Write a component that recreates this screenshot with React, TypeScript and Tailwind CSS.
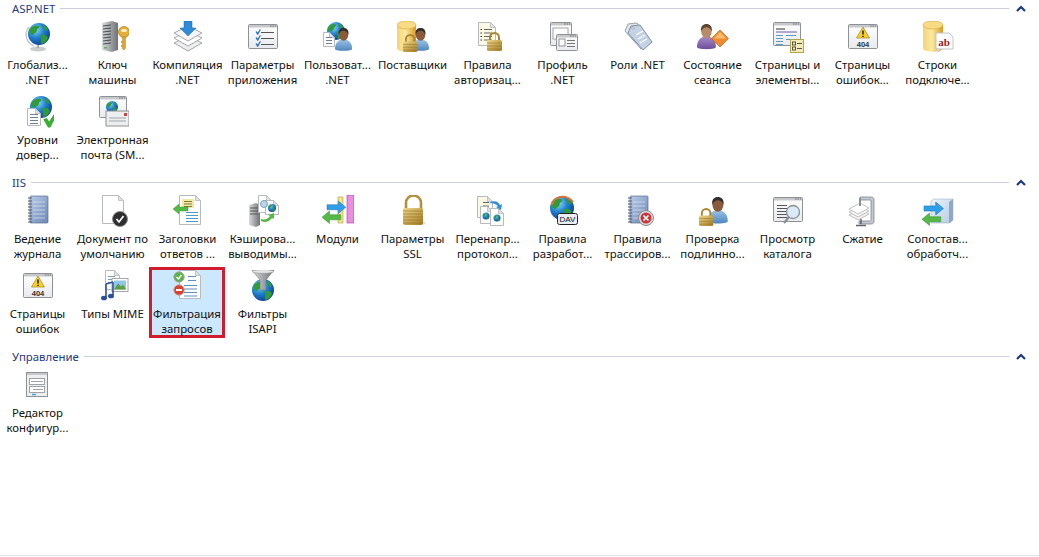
import type { ReactNode } from "react";

const Defs = () => (
  <svg width="0" height="0" className="block h-0 w-0">
    <defs>
      <radialGradient id="globe" cx="35%" cy="30%" r="75%">
        <stop offset="0" stopColor="#8fd8f5" />
        <stop offset="0.5" stopColor="#1f80cf" />
        <stop offset="1" stopColor="#0c3f8f" />
      </radialGradient>
      <linearGradient id="gold" x1="0" y1="0" x2="1" y2="0">
        <stop offset="0" stopColor="#f2d478" />
        <stop offset="0.45" stopColor="#fbe9a0" />
        <stop offset="1" stopColor="#d9991f" />
      </linearGradient>
      <linearGradient id="lockb" x1="0" y1="0" x2="1" y2="1">
        <stop offset="0" stopColor="#efd98a" />
        <stop offset="1" stopColor="#a47b25" />
      </linearGradient>
      <linearGradient id="steel" x1="0" y1="0" x2="1" y2="0">
        <stop offset="0" stopColor="#d8dadc" />
        <stop offset="1" stopColor="#6f7275" />
      </linearGradient>
      <linearGradient id="shirt" x1="0" y1="0" x2="0" y2="1">
        <stop offset="0" stopColor="#9cc4e8" />
        <stop offset="1" stopColor="#4f86c0" />
      </linearGradient>
      <linearGradient id="purple" x1="0" y1="0" x2="0" y2="1">
        <stop offset="0" stopColor="#a78cc9" />
        <stop offset="1" stopColor="#6c4d9a" />
      </linearGradient>
      <linearGradient id="note" x1="0" y1="0" x2="1" y2="1">
        <stop offset="0" stopColor="#b9cbe8" />
        <stop offset="1" stopColor="#6b87b5" />
      </linearGradient>
      <linearGradient id="win" x1="0" y1="0" x2="0" y2="1">
        <stop offset="0" stopColor="#ffffff" />
        <stop offset="1" stopColor="#e8eaee" />
      </linearGradient>
      <linearGradient id="box" x1="0" y1="0" x2="1" y2="1">
        <stop offset="0" stopColor="#eef4fa" />
        <stop offset="1" stopColor="#b4cbe2" />
      </linearGradient>
    </defs>
  </svg>
);

const Globe = ({ x, y, r }: { x: number; y: number; r: number }) => (
  <g transform={`translate(${x} ${y}) scale(${r / 10})`}>
    <circle r="10" fill="url(#globe)" />
    <path
      d="M-7-6c3-2 6-2 7-1 1 2-2 2-2 4 0 2-3 2-3 4-2 0-4-2-4-3 0-2 1-3 2-4zM1 1c3-1 6 0 7 2 0 3-3 6-6 6-1-2 1-4-1-8zM4-8c2 0 4 3 4 5-2 0-3-1-4-2z"
      fill="#2f9a3c"
    />
  </g>
);

const Doc = ({ x, y, w, h, f = "#fff" }: { x: number; y: number; w: number; h: number; f?: string }) => (
  <g>
    <path
      d={`M${x + 0.5} ${y + 0.5}h${w - 6}l5 5v${h - 6}h-${w - 1}z`}
      fill={f}
      stroke="#b6b9bd"
      strokeWidth="1"
    />
    <path d={`M${x + w - 5.5} ${y + 0.5}v5h5z`} fill="#dfe2e6" stroke="#b6b9bd" strokeWidth="0.8" />
  </g>
);

const Lines = ({ x, y, w, n, c = "#5b8fc4", g = 3 }: { x: number; y: number; w: number; n: number; c?: string; g?: number }) => (
  <g stroke={c} strokeWidth="1">
    {Array.from({ length: n }).map((_, i) => (
      <path key={i} d={`M${x} ${y + i * g + 0.5}h${w}`} />
    ))}
  </g>
);

const User = ({ x, y, s = 1, body = "url(#shirt)", skin = "#8a5a3c", hair = "#33302c" }: { x: number; y: number; s?: number; body?: string; skin?: string; hair?: string }) => (
  <g transform={`translate(${x} ${y}) scale(${s})`}>
    <path d="M0 22c0-6 3-9 7-10h4c4 1 7 4 7 10 0 1-3 2-9 2s-9-1-9-2z" fill={body} />
    <ellipse cx="9" cy="7" rx="5" ry="6.5" fill={skin} />
    <path d="M4 7C3 2 6 0 9 0s6 2 5 7c-1-3-3-4-5-4S5 4 4 7z" fill={hair} />
  </g>
);

const Lock = ({ x, y, s = 1 }: { x: number; y: number; s?: number }) => (
  <g transform={`translate(${x} ${y}) scale(${s})`}>
    <path d="M3 9V5.5a4.5 4.5 0 0 1 9 0V9" fill="none" stroke="#a8862f" strokeWidth="2" />
    <rect x="0" y="8" width="15" height="11" rx="1.5" fill="url(#lockb)" />
    <path d="M0 11h15M0 14h15M0 17h15" stroke="#8f6c1e" strokeWidth="0.7" opacity="0.7" />
  </g>
);

const Win = ({ x, y, w, h }: { x: number; y: number; w: number; h: number }) => (
  <g>
    <rect x={x + 0.5} y={y + 0.5} width={w - 1} height={h - 1} rx="1" fill="url(#win)" stroke="#8e9196" />
    <rect x={x + 1} y={y + 1} width={w - 2} height="2.5" fill="#c6c8cc" />
    <path d={`M${x + w - 8} ${y + 2}h1.5M${x + w - 5.5} ${y + 2}h1.5M${x + w - 3} ${y + 2}h1`} stroke="#686b70" strokeWidth="1" />
  </g>
);

const Notebook = () => (
  <g>
    <rect x="8" y="1" width="18" height="27" rx="1" fill="url(#note)" stroke="#5d6f8e" strokeWidth="0.7" />
    <path d="M11 7h12M11 11h12M11 15h12M11 19h12M11 23h12" stroke="#e3ebf6" strokeWidth="0.8" opacity="0.8" />
    <path d="M6 3h4M6 6h4M6 9h4M6 12h4M6 15h4M6 18h4M6 21h4M6 24h4M6 27h4" stroke="#52565c" strokeWidth="1.2" />
  </g>
);

const Warn404 = () => (
  <g>
    <Win x={1} y={3} w={30} h={25} />
    <path d="M16 6l6.5 11h-13z" fill="#f6cf2f" stroke="#a9851a" strokeWidth="0.7" />
    <path d="M16 9.5v4M16 14.7v1.2" stroke="#222" strokeWidth="1.5" />
    <text x="16" y="26" textAnchor="middle" fontSize="7.5" fontFamily="Liberation Sans, sans-serif" fontWeight="700" fill="#333">404</text>
  </g>
);

const Check = ({ x, y, s = 1, c = "#3cae34" }: { x: number; y: number; s?: number; c?: string }) => (
  <path transform={`translate(${x} ${y}) scale(${s})`} d="M1 6l3-1 2 3 5-8 2 1-6 12h-2z" fill={c} />
);

const ArrowL = ({ x, y, c = "#56b947", s = 1 }: { x: number; y: number; c?: string; s?: number }) => (
  <path transform={`translate(${x} ${y}) scale(${s})`} d="M0 5l6-5v3h9v4H6v3z" fill={c} stroke="#2f8a2f" strokeWidth="0.4" />
);

const ArrowR = ({ x, y, c = "#2f9fe8", s = 1 }: { x: number; y: number; c?: string; s?: number }) => (
  <path transform={`translate(${x} ${y}) scale(${s})`} d="M15 5l-6-5v3H0v4h9v3z" fill={c} stroke="#1670b8" strokeWidth="0.4" />
);

const Cyl = ({ x, y, w, h }: { x: number; y: number; w: number; h: number }) => (
  <g>
    <path d={`M${x} ${y + 4}v${h - 8}c0 5 ${w} 5 ${w} 0v-${h - 8}z`} fill="url(#gold)" />
    <ellipse cx={x + w / 2} cy={y + 4} rx={w / 2} ry="4" fill="#f7dc84" stroke="#d8a437" strokeWidth="0.6" />
  </g>
);

const icons: Record<string, ReactNode> = {
  glob: (
    <g>
      <ellipse cx="16" cy="28" rx="8" ry="2.6" fill="#c9cbce" />
      <path d="M16 24v3" stroke="#a9abae" strokeWidth="2" />
      <path d="M7 6a12 12 0 0 0 5 19" fill="none" stroke="#c4c6c9" strokeWidth="1.4" />
      <Globe x={17} y={13} r={11} />
    </g>
  ),
  key: (
    <g>
      <path d="M5 2l10-2 6 2v27l-6 2-10-2z" fill="url(#steel)" />
      <path d="M6 5l8-1M6 8l8-1M6 11l8-1M6 14l8-1M6 17l8-1M6 20l8-1M6 23l8-1" stroke="#4a4d50" strokeWidth="1" />
      <rect x="7" y="26" width="3" height="1.5" fill="#5fae57" />
      <circle cx="27" cy="11" r="5.5" fill="#e5ae36" stroke="#a9781c" strokeWidth="0.7" />
      <ellipse cx="27" cy="9.5" rx="3" ry="1.6" fill="#fbf0c4" />
      <path d="M25.5 16h3v11l-1.5 2-1.5-1v-2h-1v-2h1v-2h-1v-2h1z" fill="#dba531" stroke="#a9781c" strokeWidth="0.4" />
    </g>
  ),
  stack: (
    <g>
      <g fill="#fff" stroke="#8e9196" strokeWidth="0.8">
        <path d="M2 22l14-7 14 7-14 8z" fill="#eceded" />
        <path d="M2 17l14-7 14 7-14 8z" />
        <path d="M2 12L16 5l14 7-14 8z" fill="#f5f5f5" />
      </g>
      <path d="M12 0h8v7h4l-8 8-8-8h4z" fill="#2d8bd8" stroke="#1a62a8" strokeWidth="0.5" />
    </g>
  ),
  params: (
    <g>
      <Win x={1} y={3} w={30} h={25} />
      <Check x={8} y={8} s={0.45} c="#2d72c4" />
      <Check x={8} y={14} s={0.45} c="#2d72c4" />
      <Check x={8} y={20} s={0.45} c="#2d72c4" />
      <Lines x={14} y={11} w={13} n={3} g={6} c="#555" />
    </g>
  ),
  netuser: (
    <g>
      <Globe x={14} y={10} r={9} />
      <Doc x={1} y={11} w={12} h={15} />
      <Lines x={4} y={16} w={6} n={3} c="#6d7f96" />
      <User x={13} y={7} s={0.95} />
    </g>
  ),
  prov: (
    <g>
      <Cyl x={0} y={0} w={19} h={31} />
      <User x={15} y={7} s={0.95} />
      <Lock x={6} y={13} s={0.95} />
    </g>
  ),
  auth: (
    <g>
      <Doc x={6} y={1} w={18} h={24} f="#fbf9e4" />
      <Lines x={12} y={8} w={8} n={4} g={3.5} c="#666" />
      <Lines x={8.5} y={8} w={1.5} n={4} g={3.5} c="#333" />
      <Lock x={15} y={11} s={1} />
    </g>
  ),
  profile: (
    <g>
      <Win x={3} y={1} w={22} h={24} />
      <rect x="6" y="7" width="15" height="11" fill="#fff" stroke="#a3a6aa" />
      <Win x={9} y={13} w={22} h={17} />
      <rect x="12" y="18" width="6" height="7" fill="#fff" stroke="#8e9196" />
      <Lines x={20} y={19} w={8} n={3} c="#777" />
    </g>
  ),
  roles: (
    <g>
      <path d="M6 3l9-1 13 18-9 8L3 10z" fill="#e4e7ec" stroke="#9da1a7" />
      <path d="M9 5l9-1 12 17-9 8L6 12z" fill="#c3d2e6" stroke="#7d8fa8" />
      <path d="M14 14l7-4M16 18l7-4M18 22l7-4" stroke="#fff" strokeWidth="1.2" />
      <circle cx="11" cy="7" r="1.2" fill="#fff" stroke="#777" strokeWidth="0.5" />
    </g>
  ),
  session: (
    <g>
      <User x={0} y={3} s={1.05} body="url(#purple)" skin="#b78a68" hair="#5b4636" />
      <path d="M23 9l8.5 8.5-8.5 8.5-8.5-8.5z" fill="#f08a2c" stroke="#c95e13" strokeWidth="0.7" />
      <path d="M23 11l6 6.5h-12z" fill="#f9bc6e" />
    </g>
  ),
  pages: (
    <g>
      <Win x={1} y={1} w={28} h={24} />
      <path d="M4 8h9" stroke="#333" />
      <path d="M4 11h21" stroke="#6c5bb5" />
      <Lines x={4} y={14} w={7} n={4} c="#5b9bc4" />
      <Lines x={14} y={14} w={10} n={2} g={4} c="#5b9bc4" />
      <rect x="18.5" y="18.5" width="13" height="13" fill="#f5edb5" stroke="#b2a44c" />
      <rect x="20.5" y="21" width="3" height="3" fill="none" stroke="#555" />
      <rect x="20.5" y="26" width="3" height="3" fill="none" stroke="#555" />
      <path d="M25 22.5h5M25 27.5h5" stroke="#555" />
    </g>
  ),
  e404: <Warn404 />,
  strings: (
    <g>
      <Cyl x={1} y={0} w={20} h={31} />
      <path d="M14 12h13l4 4v12H14z" fill="#fff" stroke="#c2c4c8" />
      <path d="M14 28l3 3v-3z" fill="#fff" stroke="#c2c4c8" />
      <text x="22" y="25" textAnchor="middle" fontSize="11" fontWeight="700" fontFamily="Liberation Serif, serif" fill="#9c1c1c">ab</text>
    </g>
  ),
  trust: (
    <g>
      <Globe x={19} y={11} r={11} />
      <Doc x={5} y={12} w={14} h={18} />
      <Lines x={8} y={18} w={8} n={4} c="#6d7f96" />
      <Check x={20} y={16} s={1.2} />
    </g>
  ),
  mail: (
    <g>
      <Win x={2} y={0} w={28} h={22} />
      <Globe x={15} y={11} r={6} />
      <rect x="9" y="15" width="23" height="15" fill="#eceef0" stroke="#8e9196" />
      <path d="M12 22h17M12 25h17" stroke="#a3a6aa" />
      <rect x="27" y="17" width="3" height="3" fill="#c74545" />
    </g>
  ),
  log: <Notebook />,
  defdoc: (
    <g>
      <Doc x={5} y={0} w={22} h={29} />
      <circle cx="23" cy="24" r="7.5" fill="#2e2e30" stroke="#8a8a8a" />
      <path d="M19.5 24l2.5 3 4.5-6" fill="none" stroke="#fff" strokeWidth="1.7" />
    </g>
  ),
  headers: (
    <g>
      <Doc x={7} y={0} w={22} h={30} />
      <rect x="10" y="4" width="12" height="9" fill="#f4e9a4" />
      <Lines x={12} y={6} w={8} n={3} g={2.5} c="#7f7a34" />
      <Lines x={14} y={17} w={12} n={4} c="#4f9ac4" />
      <ArrowL x={1} y={9} />
    </g>
  ),
  cache: (
    <g>
      <path d="M2 10l7-2 4 2v20l-4 2-7-2z" fill="url(#steel)" />
      <path d="M3 13h8M3 16h8M3 19h8" stroke="#555" />
      <Doc x={11} y={0} w={14} h={18} />
      <Doc x={18} y={5} w={14} h={15} />
      <Globe x={25} y={13} r={4} />
      <circle cx="17" cy="9" r="3.5" fill="#bcd4ea" stroke="#7d9cbc" />
      <path d="M14 24c4 1 7 0 9-3l-2-1 6-2v6l-2-1c-3 4-7 5-11 3z" fill="#56b947" />
    </g>
  ),
  modules: (
    <g>
      <rect x="16" y="2" width="5" height="26" fill="#f3e58a" stroke="#a99d3c" strokeWidth="0.6" />
      <rect x="25" y="0" width="7" height="28" fill="#ea8ee0" stroke="#a13c9c" strokeWidth="0.6" />
      <ArrowR x={5} y={6} s={1.25} />
      <ArrowL x={0} y={16} s={1.25} />
    </g>
  ),
  ssl: (
    <g>
      <ellipse cx="19" cy="28" rx="10" ry="2" fill="#ddd" />
      <path d="M9 14V8a7.5 7.5 0 0 1 15 0v6" fill="none" stroke="#b1913d" strokeWidth="2.6" />
      <rect x="6" y="13" width="20" height="17" rx="2" fill="url(#lockb)" />
      <path d="M6 16h20M6 19h20M6 22h20M6 25h20M6 28h20" stroke="#8f6c1e" strokeWidth="0.8" opacity="0.75" />
    </g>
  ),
  redir: (
    <g>
      <Doc x={5} y={1} w={16} h={22} f="#fbf9e4" />
      <Lines x={11} y={7} w={6} n={3} g={3.5} c="#666" />
      <Doc x={8} y={11} w={13} h={18} />
      <Doc x={18} y={13} w={14} h={18} />
      <Globe x={14} y={21} r={3.5} />
      <Globe x={25} y={23} r={3.5} />
      <path d="M17 8c5-3 9-2 11 2l2-1-1 6-5-3 2-1c-2-2-5-3-9-3z" fill="#2f8fd8" />
    </g>
  ),
  webdav: (
    <g>
      <Globe x={15} y={13} r={12} />
      <path d="M5 10C6 2 18-2 26 7" fill="none" stroke="#e2702b" strokeWidth="2" />
      <rect x="10.5" y="18.5" width="20" height="11" rx="2" fill="#e9edf2" stroke="#222" />
      <text x="20.5" y="27" textAnchor="middle" fontSize="8" fontFamily="Liberation Sans, sans-serif" fill="#111">DAV</text>
    </g>
  ),
  trace: (
    <g>
      <Notebook />
      <circle cx="24" cy="23" r="7.5" fill="#d9dce0" stroke="#888" />
      <circle cx="24" cy="23" r="5.5" fill="#c8353a" />
      <path d="M21.5 20.5l5 5M26.5 20.5l-5 5" stroke="#fff" strokeWidth="1.6" />
    </g>
  ),
  authn: (
    <g>
      <User x={11} y={2} s={1.1} />
      <Lock x={2} y={13} s={0.95} />
    </g>
  ),
  browse: (
    <g>
      <Win x={1} y={2} w={30} h={25} />
      <Lines x={5} y={10} w={10} n={5} c="#555" />
      <circle cx="21" cy="17" r="6.5" fill="#d9ebf7" stroke="#8a9096" strokeWidth="1.3" />
      <path d="M17 22l-5 6" stroke="#8a8d91" strokeWidth="2.2" />
    </g>
  ),
  compress: (
    <g>
      <path d="M13 2h11c2 0 3 1 3 3v21c0 2-1 3-3 3H12v-3h11c1 0 1-1 1-1V6c0-1 0-1-1-1H13z" fill="#c3cad3" stroke="#6f757c" strokeWidth="0.7" />
      <path d="M2 20l11-6 9 5-11 6z" fill="#f2f2f2" stroke="#9a9a9a" strokeWidth="0.6" />
      <path d="M2 17l11-6 9 5-11 6z" fill="#f7f7f7" stroke="#9a9a9a" strokeWidth="0.6" />
      <path d="M2 14l11-6 9 5-11 6z" fill="#fff" stroke="#9a9a9a" strokeWidth="0.6" />
      <path d="M13 3v8" stroke="#8a8f95" strokeWidth="2" />
      <path d="M14 24v5M9 30.5h10" stroke="#5f6368" strokeWidth="1.5" />
    </g>
  ),
  handler: (
    <g>
      <path d="M9 6l3-2h19v21l-3 3H9z" fill="url(#box)" stroke="#8ea5bd" strokeWidth="0.5" />
      <path d="M27 7l4-3v21l-4 3z" fill="#8fa9c4" />
      <ArrowR x={2} y={7} s={1.3} />
      <ArrowL x={0} y={18} s={1.25} />
    </g>
  ),
  mime: (
    <g>
      <Doc x={8} y={0} w={15} h={20} />
      <Lines x={11} y={6} w={7} n={3} c="#7d9cbc" />
      <rect x="15" y="8.5" width="16" height="13" fill="#fff" stroke="#a3a6aa" />
      <rect x="17" y="10.5" width="12" height="9" fill="#8fc7e8" />
      <path d="M17 19.5l4-6 3 3 2-2 3 5z" fill="#5e9e3e" />
      <path d="M9 14v13M16 12v13M9 14l7-2" stroke="#2e4f9c" strokeWidth="1.6" fill="none" />
      <ellipse cx="7" cy="28" rx="3" ry="2.3" fill="#2e4f9c" />
      <ellipse cx="14" cy="26" rx="3" ry="2.3" fill="#2e4f9c" />
    </g>
  ),
  filter: (
    <g>
      <Doc x={8} y={0} w={22} h={29} />
      <Lines x={17} y={6} w={8} n={2} g={4} c="#5b8fc4" />
      <Lines x={13} y={15} w={13} n={4} g={3.5} c="#5b8fc4" />
      <circle cx="8" cy="7" r="5.2" fill="#5cb04a" stroke="#9fb0a0" />
      <path d="M5.5 7l2 2 3-4" fill="none" stroke="#fff" strokeWidth="1.4" />
      <circle cx="8" cy="20" r="5.2" fill="#d9432e" stroke="#c8a49e" />
      <path d="M5 20h6" stroke="#fff" strokeWidth="2" />
    </g>
  ),
  isapi: (
    <g>
      <Globe x={16} y={20} r={11} />
      <path d="M5 0h22l-8 10v10h-6V10z" fill="url(#steel)" stroke="#777" strokeWidth="0.5" />
      <ellipse cx="16" cy="1.5" rx="11" ry="1.8" fill="#e3e5e7" stroke="#888" strokeWidth="0.5" />
    </g>
  ),
  editor: (
    <g>
      <rect x="4.5" y="3.5" width="21" height="24" fill="#eceef0" stroke="#8e9196" />
      <rect x="5" y="4" width="20" height="2" fill="#c6c8cc" />
      <rect x="7.5" y="9.5" width="15" height="6" fill="#fff" stroke="#9fa3a7" />
      <path d="M9 12.5h12" stroke="#9fa3a7" />
      <rect x="7.5" y="17.5" width="15" height="6" fill="#fff" stroke="#9fa3a7" />
      <path d="M11 20.5h10" stroke="#9fa3a7" />
      <path d="M10 25.5h4" stroke="#3aa3dc" strokeWidth="1.4" />
    </g>
  ),
};

type Item = { i: string; l: string[]; on?: boolean };

const sections: { t: string; items: Item[]; h: string }[] = [
  {
    t: "ASP.NET",
    h: "h-[174px]",
    items: [
      { i: "glob", l: ["Глобализ...", ".NET"] },
      { i: "key", l: ["Ключ", "машины"] },
      { i: "stack", l: ["Компиляция", ".NET"] },
      { i: "params", l: ["Параметры", "приложения"] },
      { i: "netuser", l: ["Пользоват...", ".NET"] },
      { i: "prov", l: ["Поставщики"] },
      { i: "auth", l: ["Правила", "авторизац..."] },
      { i: "profile", l: ["Профиль", ".NET"] },
      { i: "roles", l: ["Роли .NET"] },
      { i: "session", l: ["Состояние", "сеанса"] },
      { i: "pages", l: ["Страницы и", "элементы..."] },
      { i: "e404", l: ["Страницы", "ошибок..."] },
      { i: "strings", l: ["Строки", "подключе..."] },
      { i: "trust", l: ["Уровни", "довер..."] },
      { i: "mail", l: ["Электронная", "почта (SM..."] },
    ],
  },
  {
    t: "IIS",
    h: "h-[174px]",
    items: [
      { i: "log", l: ["Ведение", "журнала"] },
      { i: "defdoc", l: ["Документ по", "умолчанию"] },
      { i: "headers", l: ["Заголовки", "ответов ..."] },
      { i: "cache", l: ["Кэширова...", "выводимы..."] },
      { i: "modules", l: ["Модули"] },
      { i: "ssl", l: ["Параметры", "SSL"] },
      { i: "redir", l: ["Перенапр...", "протокол..."] },
      { i: "webdav", l: ["Правила", "разработ..."] },
      { i: "trace", l: ["Правила", "трассиров..."] },
      { i: "authn", l: ["Проверка", "подлинно..."] },
      { i: "browse", l: ["Просмотр", "каталога"] },
      { i: "compress", l: ["Сжатие"] },
      { i: "handler", l: ["Сопостав...", "обработч..."] },
      { i: "e404", l: ["Страницы", "ошибок"] },
      { i: "mime", l: ["Типы MIME"] },
      { i: "filter", l: ["Фильтрация", "запросов"], on: true },
      { i: "isapi", l: ["Фильтры", "ISAPI"] },
    ],
  },
  {
    t: "Управление",
    h: "h-[208px] border-b border-[#e6e1e8]",
    items: [{ i: "editor", l: ["Редактор", "конфигур..."] }],
  },
];

const Cell = ({ item }: { item: Item }) => (
  <div
    className={`mt-px flex h-[71px] flex-col items-center border-[3px] ${
      item.on ? "-ml-px w-[76px] border-[#d01c2c] bg-[#cce8ff]" : "w-[75px] border-transparent"
    }`}
  >
    <svg width="32" height="32" viewBox="0 0 32 32" className="shrink-0">
      {icons[item.i]}
    </svg>
    <div className="mt-[4px] whitespace-nowrap text-center text-[11.4px] leading-[15px] text-[#111]">
      {item.l.map((x) => (
        <div key={x}>{x}</div>
      ))}
    </div>
  </div>
);

export default function App() {
  return (
    <div
      className="h-[557px] w-[1039px] overflow-hidden bg-white"
      style={{ fontFamily: '"Noto Sans", sans-serif' }}
    >
      <Defs />
      {sections.map((s) => (
        <section key={s.t} className={s.h}>
          <div className="flex h-[17px] items-center pl-3 pr-2">
            <span className="text-[11.4px] leading-[15px] text-[#1f3a80]">{s.t}</span>
            <div className="ml-[5px] h-px flex-1 bg-[#cbcedd]" />
            <svg width="12" height="8" viewBox="0 0 12 8" className="ml-[6px] mr-[4px]">
              <path d="M2 6l4-4 4 4" fill="none" stroke="#1c3a7c" strokeWidth="2.2" />
            </svg>
          </div>
          <div className="grid grid-cols-[repeat(13,75px)] auto-rows-[75px]">
            {s.items.map((it) => (
              <Cell key={it.l.join() + it.i} item={it} />
            ))}
          </div>
        </section>
      ))}
    </div>
  );
}
